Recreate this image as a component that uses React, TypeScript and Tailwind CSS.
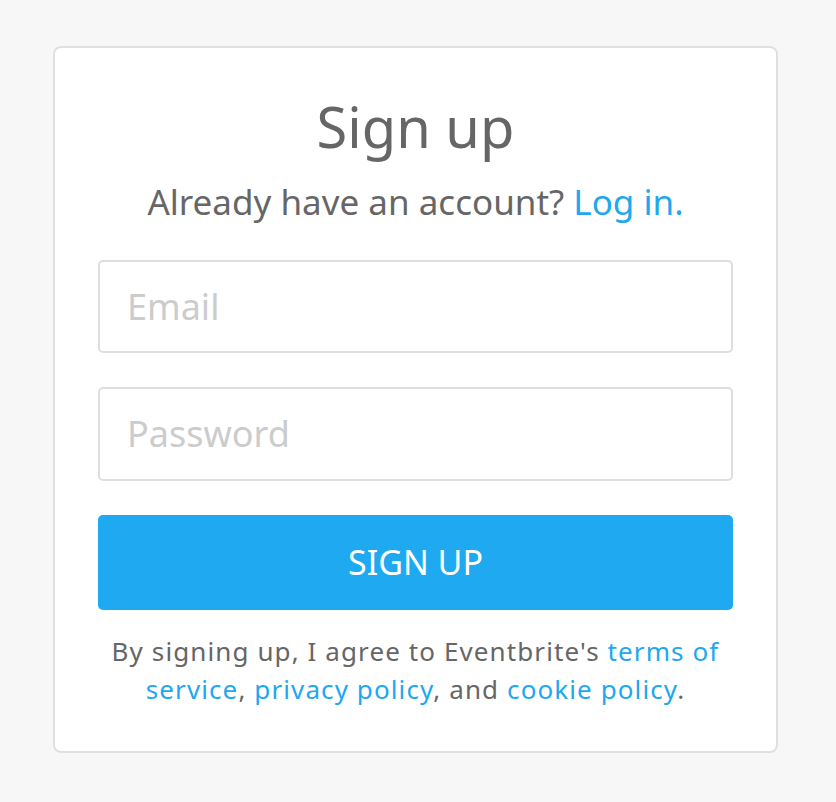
export default function App() {
  return (
    <div
      className="min-h-screen bg-[#f7f7f7] pt-[46px] pl-[53px]"
      style={{ fontFamily: '"Noto Sans", "Open Sans", sans-serif' }}
    >
      <div className="w-[725px] rounded-[8px] border-2 border-[#e0e0e0] bg-white px-[43px] pt-[44px] pb-[43px]">
        <h1 className="text-center text-[56px] leading-[68px] text-[#666666]">Sign up</h1>
        <p className="mt-[21px] text-center text-[35px] leading-[42px] text-[#666666]">
          Already have an account? <a className="text-[#1ea8ef]">Log in.</a>
        </p>
        <div className="mt-[37px] flex h-[93px] items-center rounded-[5px] border-2 border-[#dedede] px-[27px] text-[36px] text-[#cccccc]">
          Email
        </div>
        <div className="mt-[34px] flex h-[94px] items-center rounded-[5px] border-2 border-[#dedede] px-[27px] text-[36px] text-[#cccccc]">
          Password
        </div>
        <button className="mt-[34px] flex h-[95px] w-full items-center justify-center rounded-[5px] bg-[#1ea9f0] text-[34px] text-white">
          SIGN UP
        </button>
        <p className="mt-[22px] text-center text-[26px] leading-[38px] tracking-[1.1px] text-[#666666]">
          By signing up, I agree to Eventbrite's <a className="text-[#1ea8ef]">terms of service</a>,{" "}
          <a className="text-[#1ea8ef]">privacy policy</a>, and <a className="text-[#1ea8ef]">cookie policy</a>.
        </p>
      </div>
    </div>
  );
}
